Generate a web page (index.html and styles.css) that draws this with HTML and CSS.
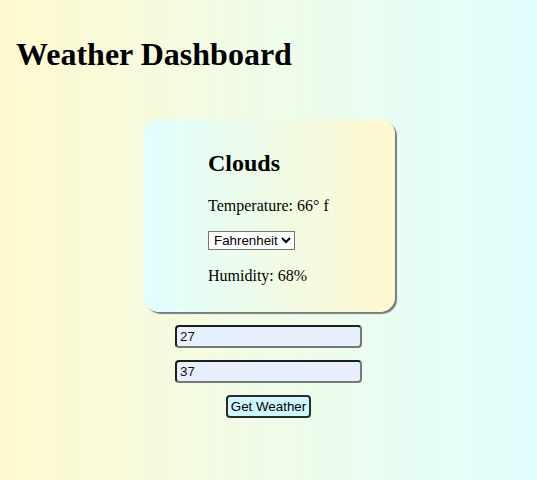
FILE: index.html
```html
<!DOCTYPE html>
<html lang="en">
<head>
<meta charset="utf-8">
<title>Weather Dashboard</title>
<link rel="stylesheet" href="styles.css">
</head>
<body>
<div class="app">
  <h1 class="title">Weather Dashboard</h1>
  <div class="main">
    <div class="card">
      <h2 class="condition">Clouds</h2>
      <p class="line">Temperature: 66° f</p>
      <div class="line select-line">
        <select class="unit">
          <option>Fahrenheit</option>
          <option>Celsius</option>
        </select>
      </div>
      <p class="line">Humidity: 68%</p>
    </div>
    <form class="form">
      <input class="coord" type="text" value="27">
      <input class="coord" type="text" value="37">
      <button class="submit" type="button">Get Weather</button>
    </form>
  </div>
</div>
</body>
</html>
```

FILE: styles.css
```css
html, body {
  height: 100%;
}
body {
  margin: 0;
  padding: 8px;
  box-sizing: border-box;
  font-family: "Liberation Serif", "Times New Roman", serif;
  background: linear-gradient(to right, #fff9d0, #e0ffff);
  color: #000;
}
.app {
  padding: 8px;
}
.title {
  font-size: 32px;
  font-weight: bold;
  margin: 20px 0 21px 0;
}
.main {
  display: flex;
  flex-direction: column;
  align-items: center;
}
.card {
  box-sizing: border-box;
  width: 251px;
  margin-top: 25px;
  margin-left: 2px;
  padding: 11px 64px;
  border-radius: 15px;
  background: linear-gradient(to right, #e0ffff, #fff8cf);
  box-shadow: 2px 2px 1px #7a7a7a;
}
.condition {
  font-size: 24px;
  font-weight: bold;
  margin: 20px 0;
}
.line {
  font-size: 16px;
  margin: 16px 0;
}
.select-line {
  margin-bottom: 17px;
}
.unit {
  font-family: "Liberation Sans", Arial, sans-serif;
  font-size: 13.33px;
  height: 19px;
  padding: 0 0 0 1px;
  border: 1px solid #767676;
  border-radius: 0;
  background: #fff;
  color: #000;
}
.form {
  display: flex;
  flex-direction: column;
  align-items: center;
  gap: 12px;
  margin-top: 13px;
}
.coord {
  box-sizing: border-box;
  width: 187px;
  height: 23px;
  padding: 1px 3px;
  font-family: "Liberation Sans", Arial, sans-serif;
  font-size: 13.33px;
  color: #111;
  background: #e8effd;
  border: 2px solid;
  border-color: #1e1e1e #777 #777 #1e1e1e;
  border-radius: 4px;
}
.submit {
  box-sizing: border-box;
  height: 23px;
  padding: 1px 3px;
  font-family: "Liberation Sans", Arial, sans-serif;
  font-size: 13.33px;
  color: #000;
  background: #cff7ff;
  border: 2px solid #2a2a2a;
  border-radius: 4px;
}
```
